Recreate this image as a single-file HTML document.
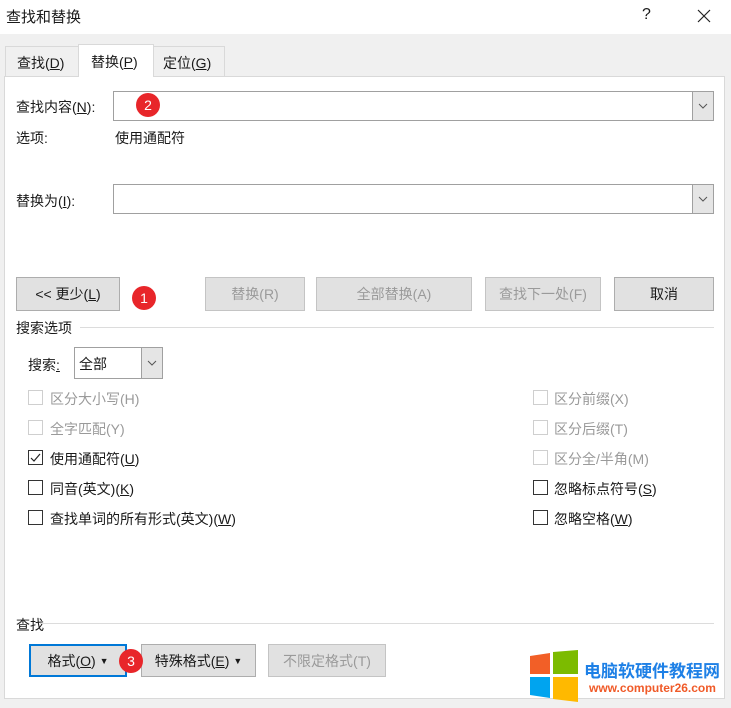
<!DOCTYPE html>
<html><head><meta charset="utf-8"><style>
*{margin:0;padding:0;box-sizing:border-box}
body{width:731px;height:708px;background:#f0f0f0;position:relative;overflow:hidden;font-family:"Liberation Sans","Noto Sans CJK SC",sans-serif;font-size:14px;color:#1a1a1a}
.a{position:absolute;white-space:nowrap}
.btn{position:absolute;background:#e1e1e1;border:1px solid #adadad;display:flex;align-items:center;justify-content:center;font-size:14px}
.dis{color:#9a9a9a;border-color:#c4c4c4}
.inp{position:absolute;background:#fff;border:1px solid #a0a0a0}
.dd{position:absolute;right:0;top:0;bottom:0;width:21px;background:#e5e5e5;border-left:1px solid #a0a0a0;display:flex;align-items:center;justify-content:center}
.cb{position:absolute;width:15px;height:15px;border:1px solid #333;background:#fff}
.cb.d{border-color:#cfcfcf}
.lbl{position:absolute;font-size:14px;white-space:nowrap}
.g{color:#9a9a9a}
.badge{position:absolute;width:24px;height:24px;border-radius:50%;background:#e8262a;color:#fff;font-size:14px;display:flex;align-items:center;justify-content:center}
.line{position:absolute;height:1px;background:#dcdcdc}
u{text-decoration:underline}
</style></head><body>
<div class="a" style="left:0;top:0;width:731px;height:34px;background:#fff"></div>
<div class="a" style="left:6px;top:6px;font-size:15px">查找和替换</div>
<div class="a" style="left:642px;top:6px;font-size:16px">?</div>
<svg class="a" style="left:697px;top:9px" width="14" height="14"><path d="M1 1L13 13M13 1L1 13" stroke="#222" stroke-width="1.2"/></svg>

<div class="a" style="left:5px;top:46px;width:74px;height:30px;border:1px solid #d9d9d9;border-bottom:none;background:#f0f0f0"></div>
<div class="a" style="left:17px;top:53px">查找(<u>D</u>)</div>
<div class="a" style="left:78px;top:44px;width:76px;height:33px;border:1px solid #d9d9d9;border-bottom:none;background:#fff;z-index:2"></div>
<div class="a" style="left:91px;top:52px;z-index:3">替换(<u>P</u>)</div>
<div class="a" style="left:153px;top:46px;width:72px;height:30px;border:1px solid #d9d9d9;border-bottom:none;background:#f0f0f0"></div>
<div class="a" style="left:163px;top:53px">定位(<u>G</u>)</div>

<div class="a" style="left:4px;top:76px;width:721px;height:623px;background:#fff;border:1px solid #d9d9d9"></div>

<div class="lbl" style="left:16px;top:97px">查找内容(<u>N</u>):</div>
<div class="inp" style="left:113px;top:91px;width:601px;height:30px"><div class="dd"><svg width="10" height="6"><path d="M1 1L5 5L9 1" stroke="#555" fill="none"/></svg></div></div>
<div class="lbl" style="left:16px;top:128px">选项:</div>
<div class="lbl" style="left:115px;top:128px">使用通配符</div>
<div class="lbl" style="left:16px;top:191px">替换为(<u>I</u>):</div>
<div class="inp" style="left:113px;top:184px;width:601px;height:30px"><div class="dd"><svg width="10" height="6"><path d="M1 1L5 5L9 1" stroke="#555" fill="none"/></svg></div></div>

<div class="btn" style="left:16px;top:277px;width:104px;height:34px">&lt;&lt; 更少(<u>L</u>)</div>
<div class="btn dis" style="left:205px;top:277px;width:100px;height:34px">替换(R)</div>
<div class="btn dis" style="left:316px;top:277px;width:156px;height:34px">全部替换(A)</div>
<div class="btn dis" style="left:485px;top:277px;width:116px;height:34px">查找下一处(F)</div>
<div class="btn" style="left:614px;top:277px;width:100px;height:34px">取消</div>

<div class="lbl" style="left:16px;top:318px">搜索选项</div>
<div class="line" style="left:80px;top:327px;width:634px"></div>
<div class="lbl" style="left:28px;top:355px">搜索<u>:</u></div>
<div class="inp" style="left:74px;top:347px;width:89px;height:32px"><div class="a" style="left:4px;top:6px">全部</div><div class="dd"><svg width="10" height="6"><path d="M1 1L5 5L9 1" stroke="#555" fill="none"/></svg></div></div>

<div class="cb d" style="left:28px;top:390px"></div><div class="lbl g" style="left:50px;top:389px">区分大小写(H)</div>
<div class="cb d" style="left:28px;top:420px"></div><div class="lbl g" style="left:50px;top:419px">全字匹配(Y)</div>
<div class="cb" style="left:28px;top:450px"><svg width="13" height="13" style="position:absolute;left:0;top:0"><path d="M2 7L5 10L11 3" stroke="#222" fill="none" stroke-width="1.2"/></svg></div><div class="lbl" style="left:50px;top:449px">使用通配符(<u>U</u>)</div>
<div class="cb" style="left:28px;top:480px"></div><div class="lbl" style="left:50px;top:479px">同音(英文)(<u>K</u>)</div>
<div class="cb" style="left:28px;top:510px"></div><div class="lbl" style="left:50px;top:509px">查找单词的所有形式(英文)(<u>W</u>)</div>

<div class="cb d" style="left:533px;top:390px"></div><div class="lbl g" style="left:554px;top:389px">区分前缀(X)</div>
<div class="cb d" style="left:533px;top:420px"></div><div class="lbl g" style="left:554px;top:419px">区分后缀(T)</div>
<div class="cb d" style="left:533px;top:450px"></div><div class="lbl g" style="left:554px;top:449px">区分全/半角(M)</div>
<div class="cb" style="left:533px;top:480px"></div><div class="lbl" style="left:554px;top:479px">忽略标点符号(<u>S</u>)</div>
<div class="cb" style="left:533px;top:510px"></div><div class="lbl" style="left:554px;top:509px">忽略空格(<u>W</u>)</div>

<div class="lbl" style="left:16px;top:615px">查找</div>
<div class="line" style="left:40px;top:623px;width:674px"></div>
<div class="btn" style="left:29px;top:644px;width:98px;height:33px;border:2px solid #0078d7">格式(<u>O</u>)&nbsp;<span style="font-size:9px">▼</span></div>
<div class="btn" style="left:141px;top:644px;width:115px;height:33px">特殊格式(<u>E</u>)&nbsp;<span style="font-size:9px">▼</span></div>
<div class="btn dis" style="left:268px;top:644px;width:118px;height:33px">不限定格式(T)</div>

<div class="badge" style="left:136px;top:93px">2</div>
<div class="badge" style="left:132px;top:286px">1</div>
<div class="badge" style="left:119px;top:649px">3</div>

<svg class="a" style="left:528px;top:650px" width="52" height="52"><path d="M2 6L22 3V24H2Z" fill="#f25f27"/><path d="M25 2L50 0V24H25Z" fill="#7cbb00"/><path d="M2 27H22V48L2 45Z" fill="#00a4ef"/><path d="M25 27H50V52L25 49Z" fill="#ffb900"/></svg>
<div class="a" style="left:584px;top:657px;font-size:17px;font-weight:bold;color:#1e80e6">电脑软硬件教程网</div>
<div class="a" style="left:589px;top:681px;font-size:12px;font-weight:bold;color:#f05a28">www.computer26.com</div>
</body></html>
